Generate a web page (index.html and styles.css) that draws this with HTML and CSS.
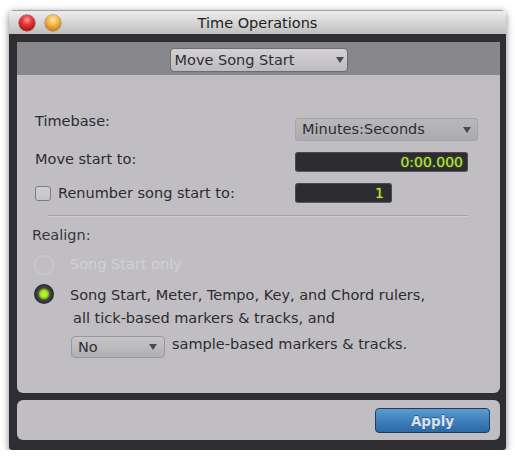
FILE: index.html
```html
<!DOCTYPE html>
<html>
<head>
<meta charset="utf-8">
<title>Time Operations</title>
<link rel="stylesheet" href="styles.css">
</head>
<body>
<div class="window">
  <div class="titlebar">
    <div class="lights"><span class="light red"></span><span class="light orange"></span></div>
    <div class="title">Time Operations</div>
    <div></div>
  </div>
  <div class="frame">
    <div class="main">
      <div class="toolbar">
        <div class="popup mode"><span>Move Song Start</span><span class="arrow"></span></div>
      </div>
      <div class="content">
        <div class="form">
          <div class="label l1">Timebase:</div>
          <div class="popup timebase"><span>Minutes:Seconds</span><span class="arrow"></span></div>
          <div class="label l2">Move start to:</div>
          <div class="field wide">0:00.000</div>
          <div class="label l3"><span class="checkbox"></span>Renumber song start to:</div>
          <div class="field narrow">1</div>
        </div>
        <div class="sep"></div>
        <div class="realign">Realign:</div>
        <div class="option opt1 disabled"><span class="radio"></span><div class="otext">Song Start only</div></div>
        <div class="option opt2"><span class="radio on"></span>
          <div class="otext">
            <div>Song Start, Meter, Tempo, Key, and Chord rulers,</div>
            <div class="indent">all tick-based markers &amp; tracks, and</div>
            <div class="line3"><div class="popup small"><span>No</span><span class="arrow"></span></div><span class="after">sample-based markers &amp; tracks.</span></div>
          </div>
        </div>
      </div>
    </div>
    <div class="footer"><button class="apply">Apply</button></div>
  </div>
</div>
</body>
</html>
```
FILE: styles.css
```css
* { box-sizing: border-box; }
html, body { margin: 0; padding: 0; background: #ffffff; }
body { font-family: "DejaVu Sans", "Verdana", sans-serif; font-size: 14.5px; color: #2c2c2e; }

.window {
  margin: 10px 0 0 9px;
  width: 497px;
  border-radius: 5px 5px 3px 3px;
  box-shadow: 0 2px 7px rgba(0,0,0,0.5);
  overflow: hidden;
}
.titlebar {
  height: 24px;
  background: linear-gradient(#ededed, #d4d4d4 55%, #bfbfbf);
  border-top: 1px solid #a0a0a0;
  display: grid;
  grid-template-columns: 1fr auto 1fr;
  align-items: center;
}
.lights { display: flex; gap: 10px; padding-left: 10px; padding-top: 1px; }
.light { width: 16px; height: 16px; border-radius: 50%; display: block; }
.light.red {
  background: radial-gradient(circle at 50% 30%, #ff9a9a 0, #e83a3a 35%, #b01414 75%, #7a0e0e 100%);
  box-shadow: 0 0 0 0.5px #7a2020;
}
.light.orange {
  background: radial-gradient(circle at 50% 30%, #ffe6a0 0, #f2b648 40%, #c97a18 80%, #9a5a10 100%);
  box-shadow: 0 0 0 0.5px #8a6020;
}
.title { font-size: 14.5px; color: #1e1e1e; line-height: 22px; }

.frame {
  background: #2f2e32;
  padding: 8px 6px 10px 8px;
  height: 416px;
  display: flex;
  flex-direction: column;
  gap: 7px;
}
.main {
  flex: 1;
  background: #c0bec2;
  border-radius: 0 0 6px 6px;
  overflow: hidden;
  display: flex;
  flex-direction: column;
}
.toolbar {
  height: 33px;
  flex: none;
  background: #88878b;
  display: flex;
  justify-content: center;
  align-items: flex-start;
  padding-top: 6px;
}

.popup { display: flex; align-items: center; justify-content: space-between; border-radius: 4px; line-height: 17px; color: #2e2e30; }
.arrow { width: 0; height: 0; border-left: 4.5px solid transparent; border-right: 4.5px solid transparent; border-top: 6px solid #4a494d; }
.popup.mode {
  width: 178px; height: 24px;
  padding: 0 3px 0 4px;
  background: linear-gradient(#d3d1d5, #bdbbbf);
  border: 1px solid #6d6c70;
}
.popup.timebase {
  width: 183px; height: 23px;
  padding: 0 6px 0 6px;
  background: linear-gradient(#b8b7ba, #acabae);
  border: 1px solid #a5a4a8;
  border-radius: 3px;
}
.popup.small {
  width: 94px; height: 22px;
  margin-left: 1px;
  padding: 0 7px 0 6px;
  background: linear-gradient(#c6c5c8, #b0afb2);
  border: 1px solid #98979b;
}

.content { padding: 43px 0 0 15px; flex: 1; }
.form {
  display: grid;
  grid-template-columns: 260px auto;
  grid-template-rows: 23px 20px 20px;
  row-gap: 11px;
  padding-left: 3px;
  justify-items: start;
}
.label { line-height: 17px; align-self: start; display: flex; align-items: center; }
.label.l1 { margin-top: -5px; }
.label.l2 { margin-top: -1px; }
.label.l3 { margin-top: 2px; }
.checkbox {
  width: 16px; height: 15px;
  border: 1px solid #7c7b7f;
  border-radius: 3px;
  background: linear-gradient(#cfced1, #c3c2c5);
  margin-right: 7px;
}
.field {
  height: 20px;
  background: #2d2c30;
  border: 1px solid #4a494d;
  border-bottom-color: #5a595d;
  border-radius: 3px;
  color: #b4ec36;
  text-shadow: 0 0 2px rgba(150,210,40,0.6);
  font-size: 14px;
  line-height: 18px;
  text-align: right;
}
.field.wide { width: 173px; padding-right: 4px; }
.field.narrow { width: 97px; padding-right: 7px; }

.sep {
  margin: 12px 0 0 16px;
  width: 420px;
  height: 1px;
  background: #a4a3a7;
  box-shadow: 0 1px 0 #d0cfd2;
}
.realign { margin-top: 11px; line-height: 17px; color: #38373a; }

.option { display: flex; align-items: flex-start; line-height: 23px; }
.option.opt1 { margin-top: 9px; }
.option.opt2 { margin-top: 8px; }
.radio {
  flex: none;
  width: 20px; height: 20px;
  margin-left: 2px;
  border-radius: 50%;
}
.opt1 .radio { margin-top: 1.5px; border: 1.5px solid #cfced2; }
.radio.on {
  background: radial-gradient(circle, #c8f545 0, #a2e21c 3.5px, #6c9e14 5px, #48474b 6px, #353438 8px, #2a292c 10px);
}
.otext { margin-left: 16px; }
.disabled .otext { color: #d2d1d4; }
.indent { padding-left: 3px; }
.line3 { display: flex; align-items: flex-start; margin-top: 6px; line-height: 17px; }
.after { margin-left: 7px; }

.footer {
  height: 40px;
  flex: none;
  background: #c0bec2;
  border-radius: 6px;
  display: flex;
  justify-content: flex-end;
  align-items: flex-start;
  padding: 8px 10px 0 0;
}
.apply {
  width: 115px; height: 25px;
  border: 1px solid #1f3c60;
  border-radius: 4px;
  background: linear-gradient(#5c9cd2, #3f80bc 50%, #2d69a4);
  color: #dde2ea;
  font-family: "DejaVu Sans", sans-serif;
  font-weight: bold;
  font-size: 13.5px;
  padding: 0;
  text-shadow: 0 -1px 0 rgba(20,40,70,0.5);
}
```
